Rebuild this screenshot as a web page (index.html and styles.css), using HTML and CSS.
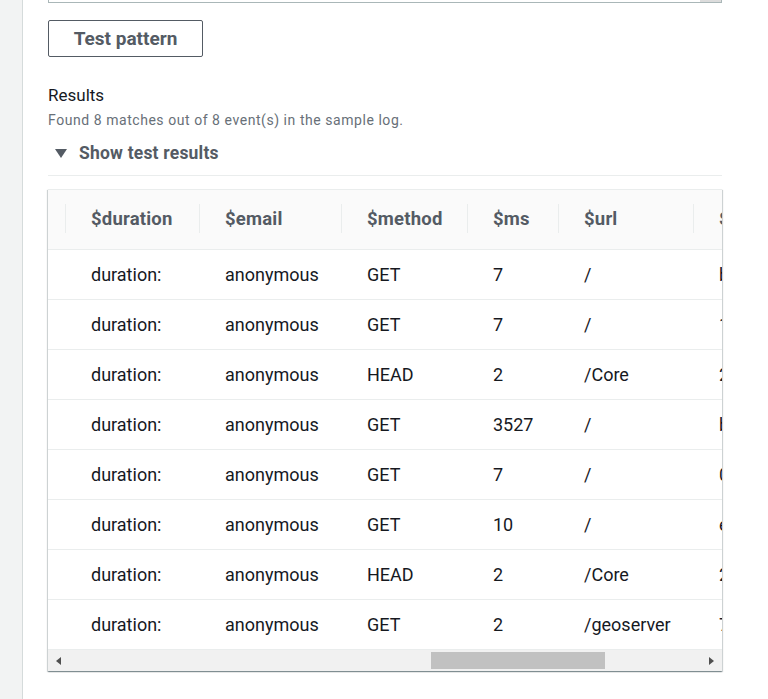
FILE: index.html
```html
<!DOCTYPE html>
<html lang="en">
<head>
<meta charset="utf-8">
<title>Test pattern results</title>
<link rel="stylesheet" href="styles.css">
</head>
<body>
<div class="page">
  <aside class="rail"></aside>
  <main class="panel">
    <div class="textarea"><span class="grip"></span></div>
    <button class="btn" type="button">Test pattern</button>
    <h3 class="results-title">Results</h3>
    <p class="results-desc">Found 8 matches out of 8 event(s) in the sample log.</p>
    <div class="expander">
      <svg class="caret" width="12" height="9" viewBox="0 0 12 9"><polygon points="0,0 12,0 6,9" fill="#545b64"/></svg>
      <span class="expander-label">Show test results</span>
    </div>
    <div class="table-wrap">
      <div class="table-scroll">
        <table class="grid">
          <colgroup>
            <col class="c0"><col class="c1"><col class="c2"><col class="c3"><col class="c4"><col class="c5"><col class="c6">
          </colgroup>
          <thead>
            <tr>
              <th class="first"></th>
              <th>$duration</th>
              <th>$email</th>
              <th>$method</th>
              <th>$ms</th>
              <th>$url</th>
              <th>$uuid</th>
            </tr>
          </thead>
          <tbody>
            <tr><td class="first"></td><td>duration:</td><td>anonymous</td><td>GET</td><td>7</td><td>/</td><td>b7f3a2</td></tr>
            <tr><td class="first"></td><td>duration:</td><td>anonymous</td><td>GET</td><td>7</td><td>/</td><td>1c9e04</td></tr>
            <tr><td class="first"></td><td>duration:</td><td>anonymous</td><td>HEAD</td><td>2</td><td>/Core</td><td>2a61d8</td></tr>
            <tr><td class="first"></td><td>duration:</td><td>anonymous</td><td>GET</td><td>3527</td><td>/</td><td>b04e97</td></tr>
            <tr><td class="first"></td><td>duration:</td><td>anonymous</td><td>GET</td><td>7</td><td>/</td><td>0d5b13</td></tr>
            <tr><td class="first"></td><td>duration:</td><td>anonymous</td><td>GET</td><td>10</td><td>/</td><td>e82c40</td></tr>
            <tr><td class="first"></td><td>duration:</td><td>anonymous</td><td>HEAD</td><td>2</td><td>/Core</td><td>2f19a6</td></tr>
            <tr><td class="first"></td><td>duration:</td><td>anonymous</td><td>GET</td><td>2</td><td>/geoserver</td><td>7e3d58</td></tr>
          </tbody>
        </table>
      </div>
      <div class="hscroll">
        <span class="sb-btn"><svg width="5" height="8" viewBox="0 0 5 8"><polygon points="5,0 5,8 0,4" fill="#505050"/></svg></span>
        <span class="sb-track"><span class="sb-thumb"></span></span>
        <span class="sb-btn"><svg width="5" height="8" viewBox="0 0 5 8"><polygon points="0,0 0,8 5,4" fill="#505050"/></svg></span>
      </div>
    </div>
  </main>
</div>
</body>
</html>
```
FILE: styles.css
```css
html, body {
  margin: 0;
  padding: 0;
  background: #ffffff;
}

body {
  font-family: Roboto, "Liberation Sans", Arial, sans-serif;
  color: #16191f;
}

.page {
  display: flex;
  min-height: 100vh;
}

.rail {
  flex: none;
  width: 22px;
  background: #f2f3f3;
  border-right: 1px solid #d5dbdb;
}

.panel {
  flex: 1;
  min-width: 0;
  padding: 0 46px 0 25px;
  display: flex;
  flex-direction: column;
  align-items: flex-start;
}

.textarea {
  align-self: stretch;
  height: 2px;
  border: 1px solid #aab7b8;
  border-top: 0;
  display: flex;
  justify-content: flex-end;
}

.grip {
  width: 21px;
  height: 2px;
  background: #dcdcdc;
}

.btn {
  margin-top: 17px;
  width: 155px;
  height: 37px;
  padding: 0 0 1px;
  border: 1px solid #545b64;
  border-radius: 2px;
  background: #ffffff;
  color: #545b64;
  font-family: Roboto, "Liberation Sans", Arial, sans-serif;
  font-size: 19px;
  font-weight: 700;
  line-height: 1;
}

.results-title {
  margin: 27px 0 0;
  font-size: 17px;
  font-weight: 400;
  line-height: 22px;
  color: #16191f;
}

.results-desc {
  margin: 5px 0 0;
  font-size: 14px;
  line-height: 18px;
  letter-spacing: 0.55px;
  color: #687078;
}

.expander {
  align-self: stretch;
  margin-top: 13px;
  padding-bottom: 11px;
  border-bottom: 1px solid #eaeded;
  display: flex;
  align-items: center;
}

.caret {
  margin-left: 7px;
  flex: none;
}

.expander-label {
  margin-left: 12px;
  font-size: 17.5px;
  font-weight: 700;
  line-height: 22px;
  letter-spacing: 0.2px;
  color: #545b64;
}

.table-wrap {
  align-self: stretch;
  margin-top: 13px;
  border-top: 1px solid #eaeded;
  background: #ffffff;
  box-shadow: 0 1px 1px 0 rgba(0, 28, 36, 0.3), 1px 1px 1px 0 rgba(0, 28, 36, 0.15), -1px 1px 1px 0 rgba(0, 28, 36, 0.15);
}

.table-scroll {
  overflow: hidden;
}

.grid {
  table-layout: fixed;
  width: 845px;
  border-collapse: separate;
  border-spacing: 0;
}

.c0 { width: 17px; }
.c1 { width: 134px; }
.c2 { width: 142px; }
.c3 { width: 126px; }
.c4 { width: 91px; }
.c5 { width: 135px; }
.c6 { width: 200px; }

.grid th {
  position: relative;
  padding: 17px 0 18px 26px;
  background: #fafafa;
  border-bottom: 1px solid #eaeded;
  text-align: left;
  font-size: 18.5px;
  font-weight: 700;
  line-height: 24px;
  letter-spacing: 0.2px;
  color: #545b64;
  white-space: nowrap;
  overflow: hidden;
}

.grid th::before {
  content: "";
  position: absolute;
  left: 0;
  top: 14px;
  height: 29px;
  border-left: 1px solid #eaeded;
}

.grid th.first::before {
  display: none;
}

.grid td {
  padding: 13px 0 12px 26px;
  border-bottom: 1px solid #eaeded;
  font-size: 18px;
  line-height: 24px;
  color: #16191f;
  white-space: nowrap;
  overflow: hidden;
}

.grid th.first,
.grid td.first {
  padding-left: 0;
}

.hscroll {
  display: flex;
  height: 21px;
  background: #f1f1f1;
}

.sb-btn {
  flex: none;
  width: 21px;
  display: flex;
  align-items: center;
  justify-content: center;
}

.sb-track {
  flex: 1;
  display: flex;
  align-items: center;
}

.sb-thumb {
  margin-left: 362px;
  width: 174px;
  height: 17px;
  background: #c1c1c1;
}
```
